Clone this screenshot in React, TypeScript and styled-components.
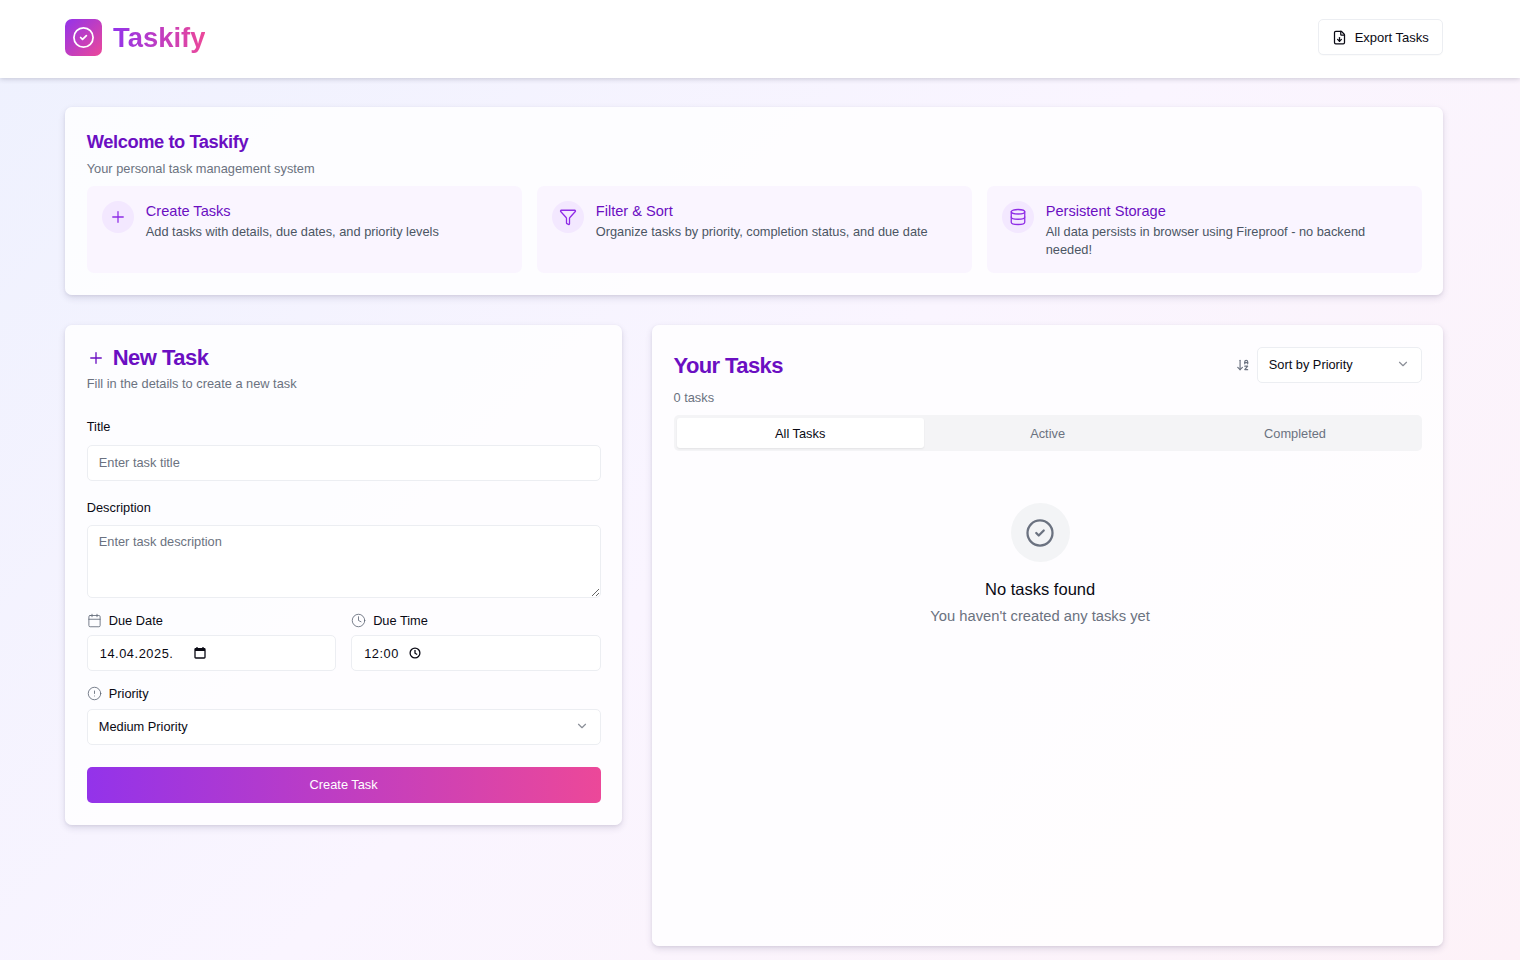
import React from "react";
import styled, { createGlobalStyle } from "styled-components";
import { ArrowDownAZ, Calendar, ChevronDown, CircleAlert, CircleCheck, Clock, Database, FileDown, Filter, Plus } from "lucide-react";

const Global = createGlobalStyle`
  html, body { margin: 0; padding: 0; }
  body {
    font-family: "Liberation Sans", Arial, sans-serif;
    color: #0a0a14;
    background: linear-gradient(135deg, #eef1fe 0%, #faf5ff 50%, #fdf2f8 100%);
    min-height: 960px;
  }
  * { box-sizing: border-box; }
`;

const Header = styled.header`
  height: 78px;
  background: #fff;
  box-shadow: 0 1px 5px rgba(40, 40, 70, 0.22);
  padding: 0 76.75px 3px 65.25px;
  display: flex;
  align-items: center;
  justify-content: space-between;
`;
const Brand = styled.div`
  display: flex;
  align-items: center;
  gap: 10.75px;
`;
const LogoMark = styled.div`
  width: 37px;
  height: 37px;
  border-radius: 7px;
  background: linear-gradient(135deg, #9333ea, #ec4899);
  color: #fff;
  display: flex;
  align-items: center;
  justify-content: center;
`;
const BrandName = styled.div`
  font-size: 27.4px;
  font-weight: 700;
  background: linear-gradient(90deg, #9333ea, #ec4899);
  -webkit-background-clip: text;
  background-clip: text;
  color: transparent;
  line-height: 37px;
`;
const ExportButton = styled.button`
  width: 125.5px;
  height: 36px;
  margin-bottom: 1px;
  background: #fff;
  border: 1px solid #eceef2;
  border-radius: 5px;
  display: flex;
  align-items: center;
  justify-content: center;
  gap: 7.5px;
  font: inherit;
  font-size: 13px;
  color: #0a0a14;
  box-shadow: 0 1px 1px rgba(0, 0, 0, 0.02);
  padding: 0;
`;
const Main = styled.main`
  padding: 29px 76.75px 14px 65.25px;
  display: flex;
  flex-direction: column;
  gap: 30px;
`;
const Card = styled.section`
  background: rgba(255, 255, 255, 0.8);
  border-radius: 7px;
  box-shadow: 0 3px 7px rgba(50, 40, 90, 0.14), 0 1px 3px rgba(50, 40, 90, 0.07);
`;
const WelcomeCard = styled(Card)`
  height: 188px;
  padding: 23px 21.5px 21px;
`;
const WelcomeTitle = styled.h2`
  margin: 0;
  font-size: 18.3px;
  line-height: 24px;
  font-weight: 700;
  letter-spacing: -0.42px;
  color: #6b0fc2;
`;
const Muted = styled.p`
  margin: 0;
  font-size: 12.8px;
  line-height: 18px;
  color: #6b7280;
`;
const WelcomeSub = styled(Muted)`
  margin-top: 6px;
`;
const FeatureGrid = styled.div`
  margin-top: 8px;
  display: grid;
  grid-template-columns: repeat(3, 1fr);
  gap: 15px;
`;
const Feature = styled.div`
  height: 87px;
  background: #faf5ff;
  border-radius: 7px;
  padding: 15px;
  display: flex;
  gap: 12px;
  align-items: flex-start;
`;
const FeatureIcon = styled.div`
  width: 32px;
  height: 32px;
  flex: none;
  border-radius: 50%;
  background: #f3e8ff;
  color: #8f2ce6;
  display: flex;
  align-items: center;
  justify-content: center;
`;
const FeatureTitle = styled.div`
  font-size: 14.6px;
  line-height: 20px;
  color: #6b0fc2;
`;
const FeatureText = styled.div`
  margin-top: 1.5px;
  font-size: 12.8px;
  line-height: 18.5px;
  color: #4b5563;
`;
const Columns = styled.div`
  display: grid;
  grid-template-columns: 556.75px 791.25px;
  gap: 30px;
  align-items: start;
`;
const FormCard = styled(Card)`
  height: 500px;
  padding: 22px 21.5px;
`;
const FormHeading = styled.div`
  display: flex;
  align-items: center;
  gap: 8px;
  color: #6b0fc2;
`;
const FormTitle = styled.h2`
  margin: 0;
  font-size: 22px;
  line-height: 22px;
  font-weight: 700;
  letter-spacing: -0.52px;
`;
const FormSub = styled(Muted)`
  margin-top: 6px;
`;
const FieldLabel = styled.label`
  display: flex;
  align-items: center;
  gap: 7px;
  font-size: 12.8px;
  line-height: 15px;
  color: #0a0a14;
  height: 15px;
  svg { color: #5b6472; }
`;
const Stack = styled.div<{ $top: number; $gap: number }>`
  margin-top: ${(p) => p.$top}px;
  display: flex;
  flex-direction: column;
  gap: ${(p) => p.$gap}px;
`;
const fieldCss = `
  width: 100%;
  height: 36px;
  background: #fff;
  border: 1px solid #eceef2;
  border-radius: 5px;
  font-family: inherit;
  font-size: 12.8px;
  color: #0a0a14;
  padding: 0 11px;
  outline: none;
`;
const TextInput = styled.input`
  ${fieldCss}
  padding-bottom: 2px;
  &::placeholder { color: #6b7280; opacity: 1; }
`;
const TextArea = styled.textarea`
  ${fieldCss}
  display: block;
  height: 73px;
  padding-top: 8px;
  line-height: 16px;
  resize: vertical;
  &::placeholder { color: #6b7280; opacity: 1; }
`;
const Row = styled.div`
  margin-top: 14.5px;
  display: grid;
  grid-template-columns: 1fr 1fr;
  gap: 15px;
`;
const StaticField = styled.div`
  ${fieldCss}
  display: flex;
  align-items: center;
  padding: 0 12px;
  letter-spacing: 0.55px;
  gap: 9px;
`;
const DateValue = styled.span<{ $width: number }>`
  width: ${(p) => p.$width}px;
  flex: none;
`;
const SelectBox = styled.div`
  ${fieldCss}
  padding-bottom: 2px;
  display: flex;
  align-items: center;
  justify-content: space-between;
  svg { color: #8b8f98; }
`;
const SubmitButton = styled.button`
  margin-top: 22px;
  width: 100%;
  height: 36px;
  padding: 0 0 1px;
  border: 0;
  border-radius: 5px;
  background: linear-gradient(90deg, #9333ea, #ec4899);
  color: #fff;
  font: inherit;
  font-size: 12.8px;
  display: block;
`;
const TasksCard = styled(Card)`
  height: 621px;
  padding: 22px 21.5px;
`;
const TasksHead = styled.div`
  display: flex;
  align-items: center;
  justify-content: space-between;
`;
const TasksTitle = styled.h2`
  margin: 0;
  padding-top: 1px;
  font-size: 22px;
  font-weight: 700;
  letter-spacing: -0.6px;
  color: #6b0fc2;
`;
const SortGroup = styled.div`
  display: flex;
  align-items: center;
  gap: 7.5px;
  color: #6b7280;
`;
const SortBox = styled(SelectBox)`
  width: 164.5px;
  padding-left: 10.5px;
`;
const TaskCount = styled(Muted)`
  margin-top: 6px;
`;
const Tabs = styled.div`
  margin-top: 8px;
  height: 36px;
  background: #f4f4f6;
  border-radius: 5px;
  padding: 3px;
  display: grid;
  grid-template-columns: repeat(3, 1fr);
`;
const Tab = styled.div<{ $active?: boolean }>`
  display: flex;
  align-items: center;
  justify-content: center;
  font-size: 12.8px;
  border-radius: 3px;
  color: ${(p) => (p.$active ? "#0a0a14" : "#6b7280")};
  background: ${(p) => (p.$active ? "#fff" : "transparent")};
  box-shadow: ${(p) => (p.$active ? "0 1px 2px rgba(0,0,0,.07)" : "none")};
`;
const Empty = styled.div`
  margin-top: 52px;
  padding-right: 15px;
  display: flex;
  flex-direction: column;
  align-items: center;
`;
const EmptyIcon = styled.div`
  width: 59px;
  height: 59px;
  border-radius: 50%;
  background: #f3f4f6;
  color: #6b7280;
  display: flex;
  align-items: center;
  justify-content: center;
`;
const EmptyTitle = styled.div`
  margin-top: 15.5px;
  font-size: 16.5px;
  line-height: 22px;
`;
const EmptyText = styled.div`
  margin-top: 6px;
  font-size: 14.75px;
  line-height: 20px;
  color: #6b7280;
`;

const NativeCalendar = () => (
  <svg width="14" height="14" viewBox="0 0 14 14" fill="none" stroke="#0a0a14">
    <rect x="2" y="2.6" width="10" height="9.4" rx="0.8" strokeWidth="1.3" />
    <rect x="2" y="2.4" width="10" height="2.6" fill="#0a0a14" stroke="none" />
    <path d="M4 1v2M10 1v2" strokeWidth="1.3" />
  </svg>
);
const NativeClock = () => (
  <svg width="14" height="14" viewBox="0 0 14 14" fill="none" stroke="#0a0a14" strokeWidth="1.3">
    <circle cx="7" cy="7" r="4.9" />
    <path d="M7 4v3.2l2.2 1.3" />
  </svg>
);

export default function App() {
  return (
    <>
      <Global />
      <Header>
        <Brand>
          <LogoMark><CircleCheck size={23} strokeWidth={1.8} /></LogoMark>
          <BrandName>Taskify</BrandName>
        </Brand>
        <ExportButton><FileDown size={15} />Export Tasks</ExportButton>
      </Header>
      <Main>
        <WelcomeCard>
          <WelcomeTitle>Welcome to Taskify</WelcomeTitle>
          <WelcomeSub>Your personal task management system</WelcomeSub>
          <FeatureGrid>
            <Feature>
              <FeatureIcon><Plus size={18} strokeWidth={1.7} /></FeatureIcon>
              <div>
                <FeatureTitle>Create Tasks</FeatureTitle>
                <FeatureText>Add tasks with details, due dates, and priority levels</FeatureText>
              </div>
            </Feature>
            <Feature>
              <FeatureIcon><Filter size={18} strokeWidth={1.7} /></FeatureIcon>
              <div>
                <FeatureTitle>Filter &amp; Sort</FeatureTitle>
                <FeatureText>Organize tasks by priority, completion status, and due date</FeatureText>
              </div>
            </Feature>
            <Feature>
              <FeatureIcon><Database size={18} strokeWidth={1.7} /></FeatureIcon>
              <div>
                <FeatureTitle>Persistent Storage</FeatureTitle>
                <FeatureText>All data persists in browser using Fireproof - no backend needed!</FeatureText>
              </div>
            </Feature>
          </FeatureGrid>
        </WelcomeCard>
        <Columns>
          <FormCard>
            <FormHeading>
              <Plus size={18} strokeWidth={1.8} />
              <FormTitle>New Task</FormTitle>
            </FormHeading>
            <FormSub>Fill in the details to create a new task</FormSub>
            <Stack $top={26} $gap={11}>
              <FieldLabel>Title</FieldLabel>
              <TextInput placeholder="Enter task title" />
            </Stack>
            <Stack $top={18.5} $gap={10.5}>
              <FieldLabel>Description</FieldLabel>
              <TextArea placeholder="Enter task description" />
            </Stack>
            <Row>
              <Stack $top={0} $gap={7.5}>
                <FieldLabel><Calendar size={15} strokeWidth={1.3} />Due Date</FieldLabel>
                <StaticField><DateValue $width={84}>14.04.2025.</DateValue><NativeCalendar /></StaticField>
              </Stack>
              <Stack $top={0} $gap={7.5}>
                <FieldLabel><Clock size={15} strokeWidth={1.3} />Due Time</FieldLabel>
                <StaticField><span>12:00</span><NativeClock /></StaticField>
              </Stack>
            </Row>
            <Stack $top={15} $gap={8}>
              <FieldLabel><CircleAlert size={15} strokeWidth={1.3} />Priority</FieldLabel>
              <SelectBox>Medium Priority<ChevronDown size={14} /></SelectBox>
            </Stack>
            <SubmitButton>Create Task</SubmitButton>
          </FormCard>
          <TasksCard>
            <TasksHead>
              <TasksTitle>Your Tasks</TasksTitle>
              <SortGroup>
                <ArrowDownAZ size={14} />
                <SortBox>Sort by Priority<ChevronDown size={14} /></SortBox>
              </SortGroup>
            </TasksHead>
            <TaskCount>0 tasks</TaskCount>
            <Tabs>
              <Tab $active>All Tasks</Tab>
              <Tab>Active</Tab>
              <Tab>Completed</Tab>
            </Tabs>
            <Empty>
              <EmptyIcon><CircleCheck size={30} strokeWidth={1.8} /></EmptyIcon>
              <EmptyTitle>No tasks found</EmptyTitle>
              <EmptyText>You haven't created any tasks yet</EmptyText>
            </Empty>
          </TasksCard>
        </Columns>
      </Main>
    </>
  );
}
